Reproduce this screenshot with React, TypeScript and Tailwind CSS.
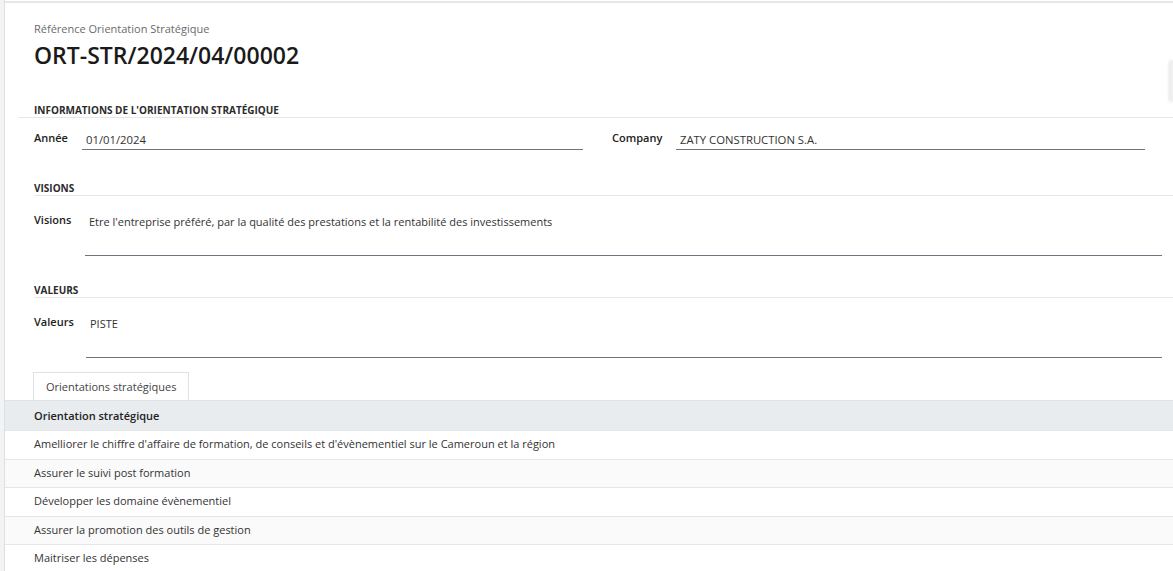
const rows = [
  "Amelliorer le chiffre d'affaire de formation, de conseils et d'évènementiel sur le Cameroun et la région",
  "Assurer le suivi post formation",
  "Développer les domaine évènementiel",
  "Assurer la promotion des outils de gestion",
  "Maitriser les dépenses",
];

const SectionTitle = ({ children, wide }: { children: string; wide?: boolean }) => (
  <div className={`border-b border-[#e6e6e6] ${wide ? "-ml-[15px] pl-[15px]" : ""}`}>
    <div className="text-[10px] font-bold uppercase text-[#2b2b2b] leading-[14px]">{children}</div>
  </div>
);

export default function App() {
  return (
    <div className="flex h-[571px] overflow-hidden bg-white text-[#212529]" style={{ fontFamily: '"Open Sans", "Noto Sans", sans-serif' }}>
      <div className="w-[5px] shrink-0 bg-[#f1f3f5] border-r border-[#dcdfe3]" />
      <div className="relative flex-1 min-w-0 pt-[1px]">
        <div className="border-t-[2px] border-[#e7e7e7]" />
        <div className="pl-[29px]">
          <div className="pt-[18px] text-[11px] leading-[16px] text-[#6b6b6b]">Référence Orientation Stratégique</div>
          <div className="mt-[3px] text-[23px] leading-[30px] font-semibold text-[#1a1a1a]">ORT-STR/2024/04/00002</div>

          <div className="mt-[33px]">
            <SectionTitle wide>Informations de l'orientation stratégique</SectionTitle>
          </div>

          <div className="flex mt-[11px] text-[11px]">
            <div className="flex w-[549px]">
              <div className="w-[48px] font-semibold text-[#222] leading-[18px]">Année</div>
              <div className="flex-1 border-b border-[#6c757d] pl-[4px] pt-[2px] leading-[18px] text-[#333] text-[11.3px]">01/01/2024</div>
            </div>
            <div className="flex w-[533px] ml-[29px]">
              <div className="w-[64px] font-semibold text-[#222] leading-[18px]">Company</div>
              <div className="flex-1 border-b border-[#6c757d] pl-[4px] pt-[2px] leading-[18px] text-[#333] text-[11.3px]">ZATY CONSTRUCTION S.A.</div>
            </div>
          </div>

          <div className="mt-[31px]">
            <SectionTitle>Visions</SectionTitle>
          </div>
          <div className="flex mt-[15px] text-[11px] pr-[11px]">
            <div className="w-[51px] font-semibold text-[#222] leading-[18px]">Visions</div>
            <div className="flex-1 border-b border-[#6c757d] h-[45px] pl-[4px] pt-[2px] leading-[18px] text-[#333]">
              Etre l'entreprise préféré, par la qualité des prestations et la rentabilité des investissements
            </div>
          </div>

          <div className="mt-[27px]">
            <SectionTitle>Valeurs</SectionTitle>
          </div>
          <div className="flex mt-[15px] text-[11px] pr-[11px]">
            <div className="w-[52px] font-semibold text-[#222] leading-[18px]">Valeurs</div>
            <div className="flex-1 border-b border-[#6c757d] h-[45px] pl-[4px] pt-[2px] leading-[18px] text-[#333]">PISTE</div>
          </div>

          <div className="mt-[14px] flex">
            <div className="-ml-[1px] h-[28px] px-[12px] border border-b-0 border-[#dee2e6] bg-white text-[11px] leading-[27px] text-[#444]">
              Orientations stratégiques
            </div>
          </div>
        </div>

        <div className="border-t border-[#dee2e6] text-[11px]">
          <div className="h-[29px] bg-[#e9ecef] pl-[29px] font-semibold leading-[29px] text-[#222]">Orientation stratégique</div>
          {rows.map((r, i) => (
            <div
              key={i}
              className={`h-[28.5px] border-t border-[#e6e6e6] pl-[29px] leading-[25px] text-[#333] ${i % 2 === 1 ? "bg-[#fafafa]" : "bg-white"}`}
            >
              {r}
            </div>
          ))}
        </div>

        <div className="absolute right-0 top-[60px] w-[3px] h-[42px] rounded-l-[3px] bg-[#f0f0f0] shadow-[-1px_0_3px_rgba(0,0,0,0.12)]" />
      </div>
    </div>
  );
}
